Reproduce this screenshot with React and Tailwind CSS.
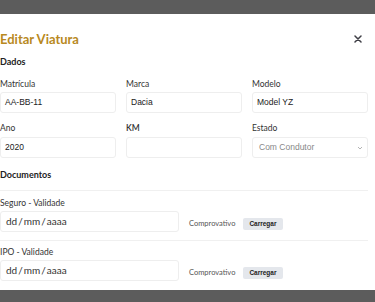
export default function App() {
    const row1 = [
        { label: "Matrícula", value: "AA-BB-11" },
        { label: "Marca", value: "Dacia" },
        { label: "Modelo", value: "Model YZ" },
    ];

    const docs = ["Seguro - Validade", "IPO - Validade"];

    return (
        <div className="h-[302px] w-[375px] overflow-hidden bg-[#5c5c5c] pt-[14px] font-['Lato',sans-serif]">
            <div className="h-[276px] w-full overflow-hidden bg-white pr-[7px] pt-[15px]">
                <div className="flex h-[20px] items-center justify-between">
                    <h1 className="text-[13px] font-bold leading-[20px] text-[#b8891e]">Editar Viatura</h1>
                    <svg width="8" height="8" viewBox="0 0 8 8" className="mr-[6px]">
                        <path d="M1 1L7 7M7 1L1 7" stroke="#3f3f46" strokeWidth="1.5" strokeLinecap="round" />
                    </svg>
                </div>

                <h2 className="mt-[6px] text-[9px] font-bold leading-[14px] text-[#222]">Dados</h2>

                <div className="mt-[9px] grid grid-cols-3 gap-x-[10px]">
                    {row1.map((f) => (
                        <div key={f.label}>
                            <div className="text-[8.5px] leading-[12px] text-[#333]">{f.label}</div>
                            <div className="mt-[2px] flex h-[21px] items-center rounded-[3px] border border-[#eeeeee] px-[4px] font-['Liberation_Sans',sans-serif] text-[8.5px] text-[#222]">
                                {f.value}
                            </div>
                        </div>
                    ))}
                </div>

                <div className="mt-[9px] grid grid-cols-3 gap-x-[10px]">
                    <div>
                        <div className="text-[8.5px] leading-[12px] text-[#333]">Ano</div>
                        <div className="mt-[3px] flex h-[21px] items-center rounded-[3px] border border-[#eeeeee] px-[4px] font-['Liberation_Sans',sans-serif] text-[8.5px] text-[#222]">
                            2020
                        </div>
                    </div>
                    <div>
                        <div className="text-[8.5px] font-semibold leading-[12px] text-[#333]">KM</div>
                        <div className="mt-[3px] h-[21px] rounded-[3px] border border-[#eeeeee]" />
                    </div>
                    <div>
                        <div className="text-[8.5px] leading-[12px] text-[#333]">Estado</div>
                        <div className="mt-[3px] flex h-[21px] items-center justify-between rounded-[3px] border border-[#eeeeee] pl-[6px] pr-[4px] font-['Liberation_Sans',sans-serif] text-[8.5px] text-[#888]">
                            Com Condutor
                            <svg width="6" height="4" viewBox="0 0 6 4">
                                <path d="M1 1L3 3L5 1" fill="none" stroke="#aaa" strokeWidth="0.9" />
                            </svg>
                        </div>
                    </div>
                </div>

                <h2 className="mt-[10px] text-[9px] font-bold leading-[14px] text-[#222]">Documentos</h2>

                {docs.map((d, i) => (
                    <div key={d} className={i === 0 ? "mt-[8px] border-t border-[#f0f0f0] pt-[6px]" : "mt-[8px] border-t border-[#f0f0f0] pt-[5px]"}>
                        <div className="text-[8.5px] leading-[12px] text-[#333]">{d}</div>
                        <div className="mt-[2px] grid grid-cols-2 gap-x-[10px]">
                            <div className="flex h-[21px] items-center rounded-[3px] border border-[#eeeeee] px-[5px] text-[10px] text-[#333]">
                                dd<span className="mx-[1px]">/</span>mm<span className="mx-[1px]">/</span>aaaa
                            </div>
                            <div className="mt-[4px] flex items-center gap-[8px]">
                                <span className="text-[7.5px] text-[#555]">Comprovativo</span>
                                <span className="flex h-[12px] items-center rounded-[2px] bg-[#e4e7ec] px-[6px] font-['Liberation_Sans',sans-serif] text-[6.5px] font-bold text-[#222]">
                                    Carregar
                                </span>
                            </div>
                        </div>
                    </div>
                ))}
            </div>
        </div>
    );
}
